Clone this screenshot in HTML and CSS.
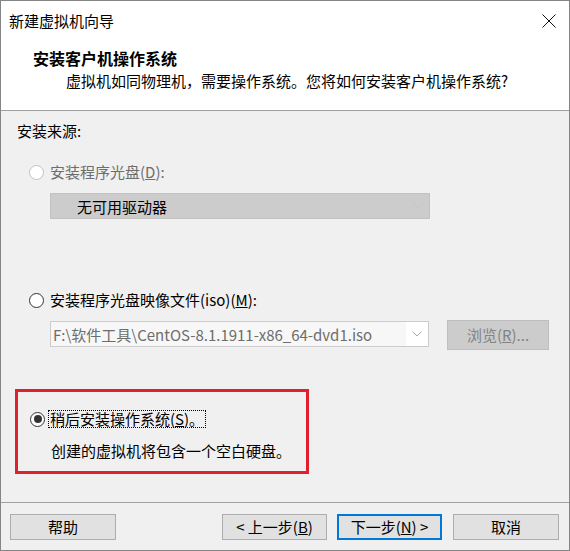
FILE: index.html
```html
<!DOCTYPE html>
<html lang="zh-CN">
<head>
    <meta charset="UTF-8">
    <meta name="viewport" content="width=device-width, initial-scale=1.0">
    <title>新建虚拟机向导</title>
    <link rel="stylesheet" href="styles.css">
</head>
<body>
    <div class="window">
        <div class="titlebar">
            <span class="title">新建虚拟机向导</span>
            <svg class="close" width="14" height="14" viewBox="0 0 14 14">
                <path d="M0.5 0.5 L13.5 13.5 M13.5 0.5 L0.5 13.5" stroke="#111" stroke-width="1" fill="none"/>
            </svg>
        </div>

        <div class="header">
            <h1>安装客户机操作系统</h1>
            <p>虚拟机如同物理机，需要操作系统。您将如何安装客户机操作系统?</p>
        </div>

        <div class="content">
            <div class="section-label">安装来源:</div>

            <div class="option disabled">
                <span class="radio"></span>
                <span class="label">安装程序光盘(<u>D</u>):</span>
            </div>
            <div class="select select-disabled">
                <span class="select-text">无可用驱动器</span>
                <span class="chevron">
                    <svg width="10" height="6" viewBox="0 0 10 6"><path d="M0.5 0.5 L5 5 L9.5 0.5" stroke="#c4c4c4" fill="none"/></svg>
                </span>
            </div>

            <div class="option option-iso">
                <span class="radio"></span>
                <span class="label">安装程序光盘映像文件(iso)(<u>M</u>):</span>
            </div>
            <div class="iso-row">
                <div class="select select-combo">
                    <span class="select-text">F:\软件工具\CentOS-8.1.1911-x86_64-dvd1.iso</span>
                    <span class="chevron">
                        <svg width="10" height="6" viewBox="0 0 10 6"><path d="M0.5 0.5 L5 5 L9.5 0.5" stroke="#a8a8a8" fill="none"/></svg>
                    </span>
                </div>
                <button class="btn btn-disabled" disabled>浏览(<u>R</u>)...</button>
            </div>

            <div class="highlight">
                <div class="option option-later">
                    <span class="radio checked"></span>
                    <span class="label focus">稍后安装操作系统(<u>S</u>)。</span>
                </div>
                <div class="note">创建的虚拟机将包含一个空白硬盘。</div>
            </div>
        </div>

        <div class="footer">
            <button class="btn">帮助</button>
            <div class="nav-buttons">
                <button class="btn">&lt; 上一步(<u>B</u>)</button>
                <button class="btn btn-default">下一步(<u>N</u>) &gt;</button>
                <button class="btn btn-cancel">取消</button>
            </div>
        </div>
    </div>
</body>
</html>
```

FILE: styles.css
```css
* {
    box-sizing: border-box;
}
body {
    margin: 0;
    font-family: "Noto Sans CJK SC", "Noto Sans", sans-serif;
    font-size: 15px;
    color: #000;
    background: #f0f0f0;
}
.window {
    width: 570px;
    height: 551px;
    border: 1px solid #858585;
    display: flex;
    flex-direction: column;
    background: #f0f0f0;
}
.titlebar {
    height: 39px;
    flex: none;
    background: #fff;
    display: flex;
    align-items: center;
    justify-content: space-between;
    padding: 0 13px 0 8px;
    line-height: 20px;
}
.close {
    display: block;
}
.header {
    height: 71px;
    flex: none;
    background: #fff;
    border-bottom: 1px solid #a0a0a0;
    padding: 8px 0 0 32px;
}
.header h1 {
    margin: 0;
    font-size: 16px;
    font-weight: bold;
    line-height: 20px;
}
.header p {
    margin: 3px 0 0 33px;
    line-height: 20px;
}
.content {
    flex: 1;
    border-bottom: 1px solid #a0a0a0;
    padding: 10px 0 0 14px;
}
.section-label {
    line-height: 20px;
    padding-left: 2px;
}
.option {
    display: flex;
    align-items: center;
    height: 20px;
    margin-top: 21px;
    padding-left: 14px;
}
.radio {
    width: 15px;
    height: 15px;
    border: 1px solid #333;
    border-radius: 50%;
    background: #fff;
    margin-right: 6px;
    flex: none;
    display: flex;
    align-items: center;
    justify-content: center;
}
.radio.checked::after {
    content: "";
    width: 8px;
    height: 8px;
    border-radius: 50%;
    background: #333;
}
.label {
    line-height: 20px;
}
.disabled .radio {
    border-color: #c2c2c2;
}
.disabled .label {
    color: #6d6d6d;
}
.select {
    display: flex;
    align-items: center;
    justify-content: space-between;
    margin-left: 35px;
    height: 26px;
    border: 1px solid #c2c2c2;
    margin-top: 11px;
}
.select-disabled {
    width: 380px;
    background: #cccccc;
    padding-left: 26px;
}
.chevron {
    width: 22px;
    height: 100%;
    display: flex;
    align-items: center;
    justify-content: center;
}
.option-iso {
    margin-top: 71px;
}
.iso-row {
    display: flex;
    align-items: flex-start;
    gap: 18px;
    margin-top: 10px;
}
.select-combo {
    width: 379px;
    height: 26px;
    margin-top: 1px;
    background: #f7f7f7;
    border-color: #cccccc;
    padding-left: 2px;
    color: #6d6d6d;
}
.select-combo .chevron {
    background: #fff;
}
.btn {
    font-family: inherit;
    font-size: 15px;
    color: #000;
    background: #e1e1e1;
    border: 1px solid #adadad;
    height: 26px;
    width: 106px;
    padding: 0;
    line-height: 20px;
}
.btn-disabled {
    width: 102px;
    height: 30px;
    background: #cccccc;
    border-color: #bfbfbf;
    color: #838383;
}
.highlight {
    margin-top: 39px;
    width: 294px;
    height: 85px;
    border: 3px solid #e0202c;
    padding-top: 17px;
}
.option-later {
    margin-top: 0;
    padding-left: 12px;
}
.option-later .radio {
    margin-right: 3px;
}
.label.focus {
    border: 1px dotted #000;
    line-height: 16px;
    padding: 0 1px;
}
.note {
    margin-top: 12px;
    padding-left: 33px;
    line-height: 20px;
}
.footer {
    height: 47px;
    flex: none;
    display: flex;
    align-items: flex-start;
    justify-content: space-between;
    padding: 11px 10px 0 9px;
}
.nav-buttons {
    display: flex;
    gap: 10px;
}
.nav-buttons .btn {
    width: 105px;
}
.btn-default {
    border: 2px solid #0078d7;
}
.nav-buttons .btn-cancel {
    width: 106px;
    margin-left: 1px;
}
```
